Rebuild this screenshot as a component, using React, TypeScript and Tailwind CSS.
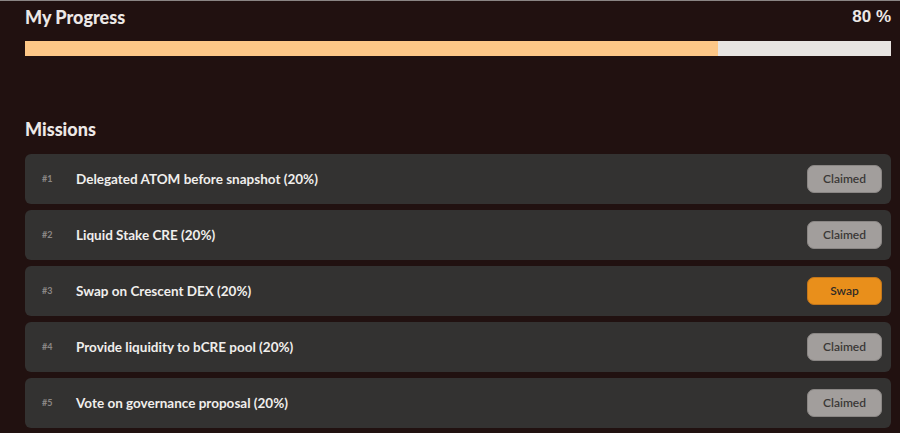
import React from "react";

const missions = [
  { n: 1, title: "Delegated ATOM before snapshot (20%)", action: "Claimed" },
  { n: 2, title: "Liquid Stake CRE (20%)", action: "Claimed" },
  { n: 3, title: "Swap on Crescent DEX (20%)", action: "Swap" },
  { n: 4, title: "Provide liquidity to bCRE pool (20%)", action: "Claimed" },
  { n: 5, title: "Vote on governance proposal (20%)", action: "Claimed" },
];

export default function App() {
  return (
    <div
      className="w-[900px] h-[433px] overflow-hidden bg-[#211110] border-t border-[#8a8584]"
      style={{ fontFamily: "Lato, 'Open Sans', sans-serif" }}
    >
      <div className="pl-[25px] pr-[9px]">
        <div className="flex items-center justify-between h-[30px] mt-[1px]">
          <div className="text-[18px] font-black text-[#ece8e6]">My Progress</div>
          <div className="text-[17px] font-bold text-[#ece8e6]" style={{ fontFamily: "'Liberation Sans', Arial, sans-serif" }}>80 %</div>
        </div>
        <div className="mt-[9px] h-[15px] w-full bg-[#e8e4e1] flex">
          <div className="h-full bg-[#fdc787]" style={{ width: "80%" }} />
        </div>
        <div className="mt-[63px] h-[20px] flex items-center text-[18px] font-black text-[#ece8e6]">Missions</div>
        <div className="mt-[15px] flex flex-col gap-[6px]">
          {missions.map((m) => (
            <div
              key={m.n}
              className="h-[50px] rounded-[6px] bg-[#333231] flex items-center pl-[17px] pr-[9px]"
            >
              <div className="w-[34px] text-[9px] text-[#8c8886] font-bold">#{m.n}</div>
              <div className="flex-1 text-[13.5px] font-bold text-[#f0eeec]">{m.title}</div>
              {m.action === "Swap" ? (
                <div className="w-[75px] h-[28px] rounded-[7px] bg-[#e98f1b] border border-[#c4761a] flex items-center justify-center text-[12px] font-semibold text-[#2f2a26]">
                  Swap
                </div>
              ) : (
                <div className="w-[75px] h-[28px] rounded-[7px] bg-[#a29e9c] border border-[#8a8684] flex items-center justify-center text-[12px] font-semibold text-[#3a3836]">
                  Claimed
                </div>
              )}
            </div>
          ))}
        </div>
      </div>
    </div>
  );
}
